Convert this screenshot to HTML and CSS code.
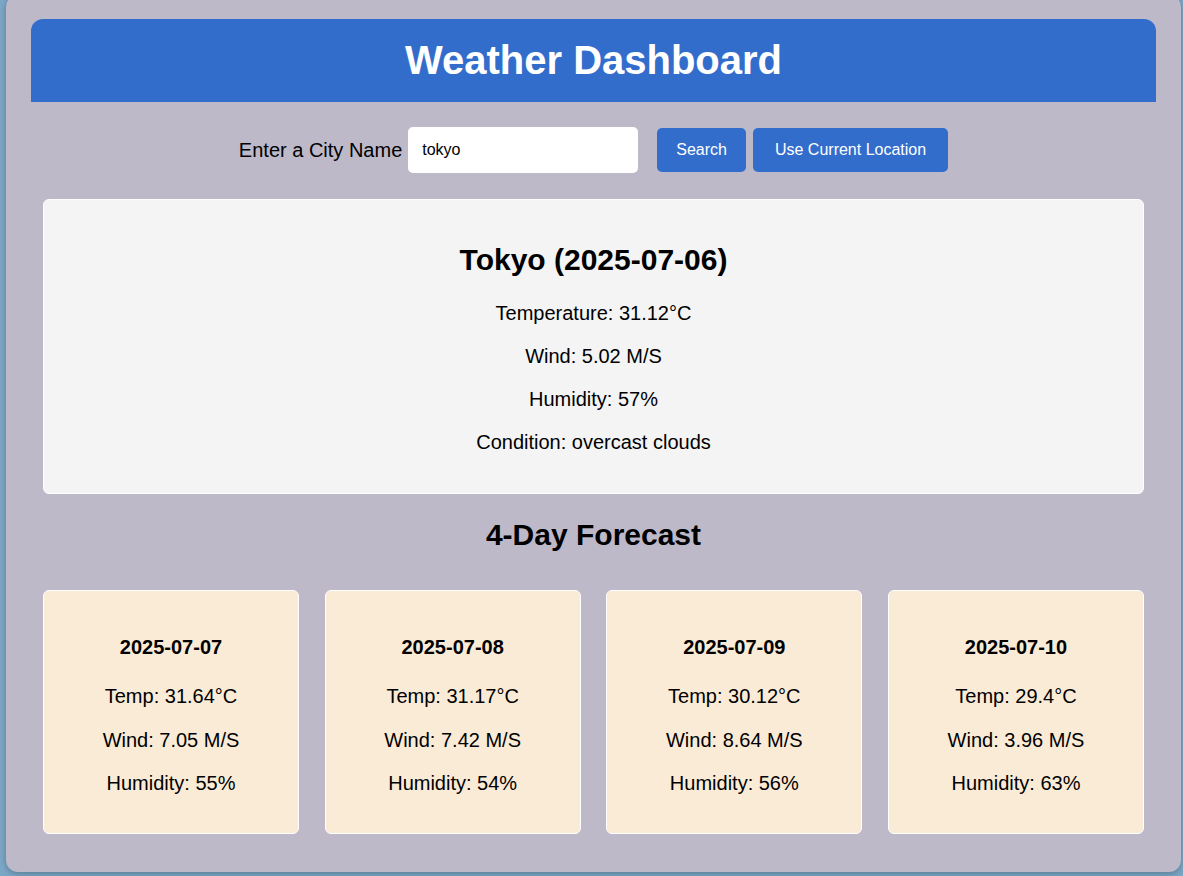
FILE: index.html
```html
<!DOCTYPE html>
<html lang="en">
<head>
<meta charset="utf-8">
<title>Weather Dashboard</title>
<link rel="stylesheet" href="styles.css">
</head>
<body>
<div class="app">
  <header class="app-header">
    <h1>Weather Dashboard</h1>
  </header>
  <div class="search-row">
    <label class="search-label" for="city">Enter a City Name</label>
    <input class="search-input" id="city" type="text" value="tokyo">
    <button class="btn btn-search">Search</button>
    <button class="btn btn-location">Use Current Location</button>
  </div>
  <main class="content">
    <section class="current">
      <h2 class="current-title">Tokyo (2025-07-06)</h2>
      <p>Temperature: 31.12°C</p>
      <p>Wind: 5.02 M/S</p>
      <p>Humidity: 57%</p>
      <p>Condition: overcast clouds</p>
    </section>
    <h2 class="forecast-title">4-Day Forecast</h2>
    <div class="forecast">
      <div class="day">
        <h3>2025-07-07</h3>
        <p>Temp: 31.64°C</p>
        <p>Wind: 7.05 M/S</p>
        <p>Humidity: 55%</p>
      </div>
      <div class="day">
        <h3>2025-07-08</h3>
        <p>Temp: 31.17°C</p>
        <p>Wind: 7.42 M/S</p>
        <p>Humidity: 54%</p>
      </div>
      <div class="day">
        <h3>2025-07-09</h3>
        <p>Temp: 30.12°C</p>
        <p>Wind: 8.64 M/S</p>
        <p>Humidity: 56%</p>
      </div>
      <div class="day">
        <h3>2025-07-10</h3>
        <p>Temp: 29.4°C</p>
        <p>Wind: 3.96 M/S</p>
        <p>Humidity: 63%</p>
      </div>
    </div>
  </main>
</div>
</body>
</html>
```
FILE: styles.css
```css
html, body {
  margin: 0;
  padding: 0;
}
body {
  background: #7ba7c6;
  font-family: "Liberation Sans", Arial, sans-serif;
  color: #000;
  min-height: 876px;
}
.app {
  width: 1175px;
  box-sizing: border-box;
  margin: -5px 0 0 6px;
  padding: 24px 25px 38px;
  background: #bdb9c9;
  border-radius: 12px;
  box-shadow: 0 2px 6px rgba(0, 0, 0, 0.25);
}
.app-header {
  background: #336dcc;
  border-radius: 12px 12px 0 0;
  height: 83px;
  display: flex;
  align-items: center;
  justify-content: center;
}
.app-header h1 {
  margin: -2px 0 0;
  color: #fff;
  font-size: 40px;
  font-weight: bold;
  line-height: 46px;
}
.search-row {
  display: flex;
  align-items: center;
  justify-content: center;
  margin-top: 25px;
  height: 46px;
}
.search-label {
  font-size: 20px;
  margin-right: 6px;
}
.search-input {
  width: 230px;
  height: 46px;
  box-sizing: border-box;
  border: none;
  border-radius: 5px;
  padding: 0 14px;
  font-family: "Liberation Sans", Arial, sans-serif;
  font-size: 16px;
  color: #000;
  background: #fff;
  margin-right: 19px;
}
.btn {
  height: 44px;
  border: none;
  border-radius: 5px;
  background: #336dcc;
  color: #fff;
  font-family: "Liberation Sans", Arial, sans-serif;
  font-size: 16px;
  padding: 0 19px;
}
.btn-search {
  margin-right: 7px;
}
.btn-location {
  padding: 0 22px;
}
.content {
  padding: 0 12px;
  margin-top: 26px;
}
.current {
  background: #f4f4f4;
  border: 1px solid #fff;
  border-radius: 6px;
  padding: 20px 20px 19px;
  text-align: center;
}
.current-title {
  font-size: 30px;
  line-height: 34px;
  margin: 23px 0 25px;
}
.current p, .day p {
  font-size: 20px;
  line-height: 23px;
  margin: 20px 0;
}
.forecast-title {
  text-align: center;
  font-size: 30px;
  line-height: 34px;
  margin: 24px 0 38px;
}
.forecast {
  display: flex;
  justify-content: space-between;
}
.day {
  width: 256px;
  box-sizing: border-box;
  background: #faebd7;
  border: 1px solid #fff;
  border-radius: 6px;
  padding: 20px 20px 17px;
  text-align: center;
}
.day h3 {
  font-size: 20px;
  line-height: 23px;
  margin: 25px 0 26px;
}
.day p {
  margin: 20px 0 20.5px;
}
```
